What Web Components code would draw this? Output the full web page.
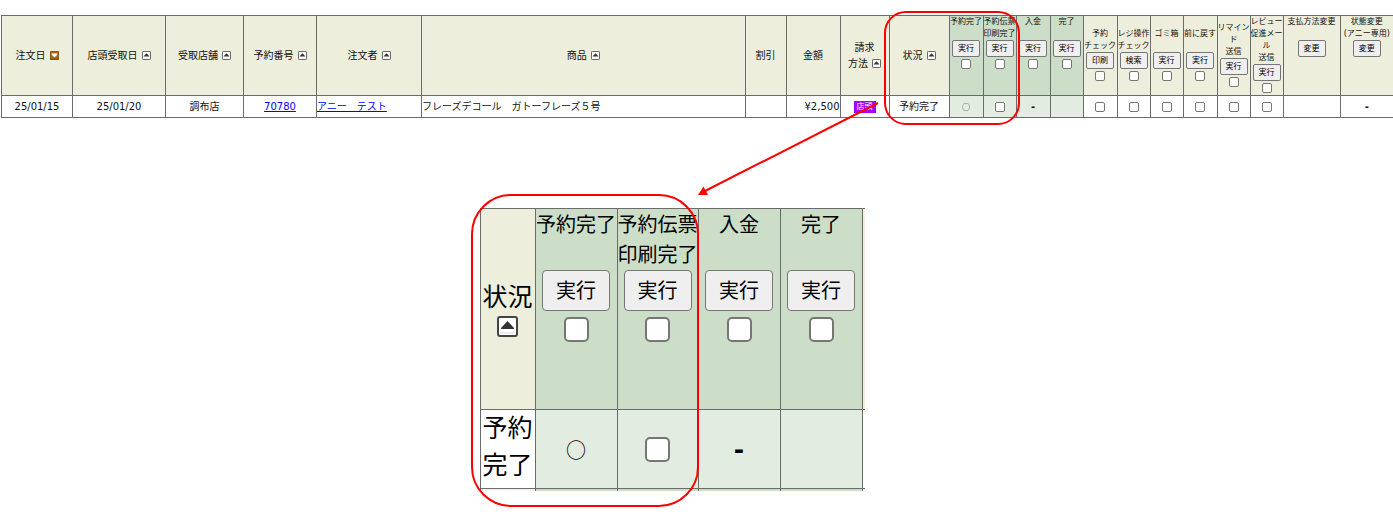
<!DOCTYPE html>
<html lang="ja">
<head>
<meta charset="utf-8">
<title>注文一覧</title>
<style>
body{margin:0;background:#fff;font-family:"DejaVu Sans","Noto Sans CJK JP",sans-serif;color:#111}
</style>
</head>
<body>
<order-page></order-page>
<script>
const define = (name, html, setup) => customElements.define(name, class extends HTMLElement {
  constructor() {
    super();
    const t = document.createElement('template');
    t.innerHTML = html;
    this.attachShadow({mode: 'open'}).append(t.content.cloneNode(true));
  }
  connectedCallback() { if (setup) setup(this, this.shadowRoot); }
});

define('sort-toggle', `
<style>
:host{display:inline-block;width:var(--sort,9px);height:var(--sort,9px);vertical-align:var(--sort-align,-1px);margin-left:var(--sort-gap,4px)}
button{display:block;width:100%;height:100%;padding:0;border:0;background:none}
svg{display:block;width:100%;height:100%}
.down{display:none}
:host([active]) .down{display:block}
:host([active]) .up{display:none}
</style>
<button type="button" aria-label="並べ替え">
<svg class="up" viewBox="0 0 21 21"><rect x="1" y="1" width="19" height="19" rx="2" fill="#fff" stroke="#444" stroke-width="2"/><path d="M10.5 5 17 12v1H4v-1z" fill="#333"/><path d="M3 17h15" stroke="#ddd"/></svg>
<svg class="down" viewBox="0 0 21 21"><rect width="21" height="21" rx="2" fill="#8a5200"/><rect x="2" y="2" width="17" height="15" fill="#b06c10"/><path d="M4 6h13v3l-6.500 6L4 9z" fill="#fff"/></svg>
</button>`);

define('tick-box', `
<style>
:host{display:block;line-height:0}
input{appearance:none;display:block;box-sizing:border-box;width:var(--tick,10px);height:var(--tick,10px);margin:0 auto;background:#fff;border:var(--tick-line,1px) solid #767676;border-radius:var(--tick-round,2px)}
input:checked{background:#0075ff}
</style>
<input type="checkbox">`, (host, root) => {
  root.querySelector('input').setAttribute('aria-label', host.getAttribute('label') || '選択');
});

define('bulk-action', `
<style>
:host{display:block;text-align:center;font-size:var(--small,8px);line-height:var(--small-line,12px);white-space:nowrap}
.title{min-height:calc(var(--small-line,12px)*2);display:flex;flex-direction:column;align-items:center}
button{display:block;box-sizing:border-box;width:var(--btn-w,28px);height:var(--btn-h,17px);margin:0 auto;padding:0;font:inherit;color:#000;background:#efefef;border:1px solid #767676;border-radius:var(--btn-round,2px);line-height:1}
tick-box{margin:var(--tick-gap,2px) 0}
:host([no-tick]) tick-box{display:none}
</style>
<div class="title"><slot></slot></div>
<button type="button"></button>
<tick-box></tick-box>`, (host, root) => {
  root.querySelector('button').textContent = host.getAttribute('action');
});

define('pay-badge', `
<style>
:host{display:block;box-sizing:border-box;width:22px;height:12px;margin:0 auto;background:#a200ff;color:#fff;font-size:8px;line-height:12px;text-align:center}
</style><slot></slot>`);

const tableStyle = `
table{border-collapse:collapse;table-layout:fixed;border-spacing:0}
th,td{border:1px solid #6b6b6b;padding:0;font-weight:400;text-align:center;vertical-align:middle}
th{background:#eeeedc}
th.g{background:#ccdec8}
td.g{background:#e2ece0}
.top{vertical-align:top}
.tail td{border-bottom:0;background:#f4f4ee}
.tail td.g{background:#ccdec8}
.dash{font-weight:700}
a{color:#00f}
.jp{font-family:"Noto Sans CJK JP",sans-serif}`;

define('order-table', `
<style>
:host{display:block}
${tableStyle}
table{width:100%;min-width:1180px;font-size:10px;line-height:16px}
thead th{height:79px}
tbody td{height:21px}
.l{text-align:left}
.r{text-align:right}
.ring{font-size:8px}
tr>:last-child{border-right:0}
</style>
<table>
<colgroup>
<col style="width:71px"><col style="width:93px"><col style="width:78px"><col style="width:73px"><col style="width:105px"><col><col style="width:41px"><col style="width:54px"><col style="width:49px"><col style="width:60px"><col style="width:34px"><col style="width:33px"><col style="width:34px"><col style="width:33px"><col style="width:34px"><col style="width:33px"><col style="width:33px"><col style="width:34px"><col style="width:33px"><col style="width:33px"><col style="width:57px"><col style="width:53px">
</colgroup>
<thead><tr>
<th>注文日<sort-toggle active></sort-toggle></th>
<th>店頭受取日<sort-toggle></sort-toggle></th>
<th>受取店舗<sort-toggle></sort-toggle></th>
<th>予約番号<sort-toggle></sort-toggle></th>
<th>注文者<sort-toggle></sort-toggle></th>
<th>商品<sort-toggle></sort-toggle></th>
<th>割引</th>
<th>金額</th>
<th>請求<br>方法<sort-toggle></sort-toggle></th>
<th>状況<sort-toggle></sort-toggle></th>
<th class="g top"><bulk-action action="実行"><span>予約完了</span></bulk-action></th>
<th class="g top"><bulk-action action="実行"><span>予約伝票</span><span>印刷完了</span></bulk-action></th>
<th class="g top"><bulk-action action="実行"><span>入金</span></bulk-action></th>
<th class="g top"><bulk-action action="実行"><span>完了</span></bulk-action></th>
<th><bulk-action action="印刷"><span>予約</span><span>チェック</span></bulk-action></th>
<th><bulk-action action="検索"><span>レジ操作</span><span>チェック</span></bulk-action></th>
<th><bulk-action action="実行"><span>ゴミ箱</span></bulk-action></th>
<th><bulk-action action="実行"><span>前に戻す</span></bulk-action></th>
<th><bulk-action action="実行"><span>リマイン</span><span>ド</span><span>送信</span></bulk-action></th>
<th><bulk-action action="実行"><span>レビュー</span><span>促進メー</span><span>ル</span><span>送信</span></bulk-action></th>
<th class="top"><bulk-action action="変更" no-tick><span>支払方法変更</span></bulk-action></th>
<th class="top"><bulk-action action="変更" no-tick><span>状態変更</span><span>(アニー専用)</span></bulk-action></th>
</tr></thead>
<tbody><tr>
<td>25/01/15</td><td>25/01/20</td><td>調布店</td><td><a href="#70780">70780</a></td>
<td class="l"><a href="#customer">アニー　テスト</a></td>
<td class="l">フレーズデコール　ガトーフレーズ５号</td>
<td></td><td class="r">¥2,500</td><td><pay-badge>店頭</pay-badge></td><td>予約完了</td>
<td class="g jp ring">○</td><td class="g"><tick-box></tick-box></td><td class="g dash">-</td><td class="g"></td>
<td><tick-box></tick-box></td><td><tick-box></tick-box></td><td><tick-box></tick-box></td><td><tick-box></tick-box></td><td><tick-box></tick-box></td><td><tick-box></tick-box></td>
<td></td><td class="dash">-</td>
</tr></tbody>
</table>`);

define('status-detail', `
<style>
:host{display:block;color:#000;--small:20px;--small-line:30px;--btn-w:68px;--btn-h:41px;--btn-round:4px;--tick:25px;--tick-line:2px;--tick-round:5px;--tick-gap:6px;--sort:21px;--sort-gap:0px;--sort-align:-4px}
${tableStyle}
table{width:385px;font-size:25px;line-height:37px}
thead th{height:199px}
tbody td{height:78px}
tbody .tail td{height:2px;line-height:0}
th.g{padding-top:1px}
tr>:last-child{border-right:0}
th.next{background:#f8eedb}
.status sort-toggle{display:block;margin:2px auto 0}
.status{line-height:32px}
td.state{height:74px;padding-bottom:4px}
.ring{font-size:20px}
</style>
<table>
<colgroup><col style="width:55px"><col style="width:82px"><col style="width:81px"><col style="width:82px"><col style="width:82px"><col style="width:3px"></colgroup>
<thead><tr>
<th class="status">状況<sort-toggle></sort-toggle></th>
<th class="g top"><bulk-action action="実行"><span>予約完了</span></bulk-action></th>
<th class="g top"><bulk-action action="実行"><span>予約伝票</span><span>印刷完了</span></bulk-action></th>
<th class="g top"><bulk-action action="実行"><span>入金</span></bulk-action></th>
<th class="g top"><bulk-action action="実行"><span>完了</span></bulk-action></th>
<th class="next"></th>
</tr></thead>
<tbody>
<tr><td class="state">予約<br>完了</td><td class="g jp ring">○</td><td class="g"><tick-box></tick-box></td><td class="g dash">-</td><td class="g"></td><td></td></tr>
<tr class="tail"><td></td><td class="g"></td><td class="g"></td><td class="g"></td><td class="g"></td><td></td></tr>
</tbody>
</table>`);

define('red-frame', `
<style>
:host{display:block;box-sizing:border-box;position:absolute;border:2px solid #f00;pointer-events:none}
</style>`);

define('red-arrow', `
<style>
:host{display:block;position:absolute;pointer-events:none}
svg{display:block}
</style>
<svg width="184" height="98" viewBox="0 0 184 98"><path d="M181 3 8 91" fill="none" stroke="#f00" stroke-width="2"/><path d="M1 95 6.500 86.500 11 95z" fill="#f00"/></svg>`);

define('order-page', `
<style>
:host{display:block;position:relative;padding:15px 0 16px 1px;min-width:1181px}
.zoomed{display:flex;justify-content:flex-end;margin-top:90px;padding-right:528px}
.f1{right:373px;top:11px;width:136px;height:114px;border-radius:22px}
.f2{right:694px;top:194px;width:228px;height:313px;border-radius:40px}
red-arrow{right:512px;top:100px}
</style>
<order-table></order-table>
<div class="zoomed"><status-detail></status-detail></div>
<red-frame class="f1"></red-frame>
<red-frame class="f2"></red-frame>
<red-arrow></red-arrow>`);
</script>
</body>
</html>
